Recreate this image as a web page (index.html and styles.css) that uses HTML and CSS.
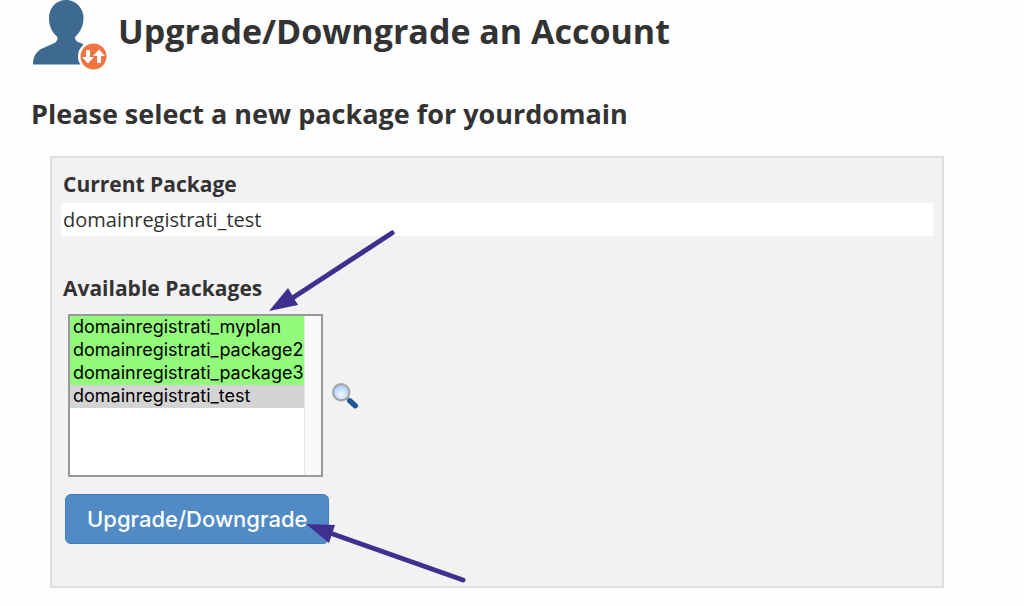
FILE: index.html
```html
<!DOCTYPE html>
<html lang="en">
<head>
<meta charset="utf-8">
<meta name="viewport" content="width=device-width, initial-scale=1">
<title>Upgrade/Downgrade an Account</title>
<link rel="stylesheet" href="styles.css">
</head>
<body>
<main class="page">
  <header class="page-header">
    <svg class="account-icon" viewBox="0 0 76 72" aria-hidden="true">
      <path fill="#3e6990" d="M34 0C24 0 17 8 17 18c0 8 3 14 7.500 18 2 2 1 5-2 7L9 49C4 52 1 57 1 64.500h50V44l-5-2c-3-2-4-4-2-6 4-4 7.500-10 7.500-18C51.500 8 44 0 34 0z"/>
      <circle cx="61.500" cy="56.500" r="15.500" fill="#fff"/>
      <circle cx="61.500" cy="56.500" r="13" fill="#f07440"/>
      <path fill="#fff" d="M54 50h4v7h4l-6 6.500-6-6.500h4zM65 63h4v-7h4L67 49.500 61 56h4z"/>
    </svg>
    <h1 class="page-title">Upgrade/Downgrade an Account</h1>
  </header>

  <h2 class="page-subtitle">Please select a new package for yourdomain</h2>

  <form class="panel">
    <h3 class="field-title">Current Package</h3>
    <div class="current-package">domainregistrati_test</div>

    <label class="field-title available-title" for="packages">Available Packages</label>
    <div class="package-row">
      <select class="package-list" id="packages" name="package" size="7">
        <option class="package available">domainregistrati_myplan</option>
        <option class="package available">domainregistrati_package2</option>
        <option class="package available">domainregistrati_package3</option>
        <option class="package current">domainregistrati_test</option>
      </select>
      <button class="search-button" type="button" aria-label="View package details">
        <svg class="search-icon" viewBox="0 0 26 26" aria-hidden="true">
          <defs>
            <radialGradient id="lens" cx="50%" cy="65%" r="60%">
              <stop offset="0" stop-color="#f4f9ff"/>
              <stop offset="1" stop-color="#a9ccf4"/>
            </radialGradient>
          </defs>
          <path d="M14.500 14.500l3 3" stroke="#a58a70" stroke-width="3"/>
          <path d="M17.500 17.500l5 4.500" stroke="#1e5799" stroke-width="5" stroke-linecap="round"/>
          <circle cx="9.500" cy="9.500" r="7.500" fill="url(#lens)" stroke="#a3a6aa" stroke-width="2"/>
        </svg>
      </button>
      <svg class="arrow arrow-list" viewBox="0 0 128 84" aria-hidden="true">
        <path d="M124 4L26 68" stroke="#412f90" stroke-width="5" stroke-linecap="round"/>
        <path d="M1 82L20 59l10 17z" fill="#412f90"/>
      </svg>
    </div>

    <div class="actions">
      <button class="submit-button" type="button">Upgrade/Downgrade</button>
      <svg class="arrow arrow-submit" viewBox="0 0 162 62" aria-hidden="true">
        <path d="M157 57L24 10" stroke="#412f90" stroke-width="5" stroke-linecap="round"/>
        <path d="M0 1l29 1-6 18z" fill="#412f90"/>
      </svg>
    </div>
  </form>
</main>
</body>
</html>
```
FILE: styles.css
```css
* {
  box-sizing: border-box;
}

body {
  margin: 0;
  background: #fefefe;
  color: #333;
  font-family: "Open Sans", sans-serif;
}

.page {
  padding: 0 80px 16px 31px;
}

.page-header {
  display: flex;
  align-items: flex-start;
  gap: 10px;
}

.account-icon {
  flex: none;
  width: 76px;
  height: 72px;
  margin-left: 1px;
}

.page-title {
  margin: 7px 0 0;
  font-size: 34px;
  line-height: 48px;
}

.page-subtitle {
  margin: 24px 0;
  font-size: 27px;
  line-height: 36px;
}

.panel {
  margin-left: 19px;
  padding: 8px 9px 42px;
  border: 2px solid #dcdee0;
  background: #f2f2f2;
}

.field-title {
  display: block;
  margin: 0;
  padding: 3px 2px 4px;
  font-size: 21px;
  font-weight: 700;
  line-height: 30px;
}

.current-package {
  padding: 0 2px;
  background: #fff;
  font-size: 20px;
  line-height: 33px;
}

.available-title {
  margin-top: 34px;
}

.package-row {
  position: relative;
  display: flex;
  align-items: center;
  gap: 8px;
  margin: 7px 0 0 7px;
}

.package-list {
  width: 255px;
  height: 163px;
  padding: 0 17px 0 0;
  overflow: hidden;
  border: 2px solid #999;
  border-radius: 0;
  outline: 0;
  background: linear-gradient(to left, #fafafa 16px, #e6e6e6 16px, #e6e6e6 17px, #fff 17px);
  color: #000;
  font-family: Inter, sans-serif;
  font-size: 18px;
}

.package {
  min-height: 23px;
  padding: 0 3px;
  line-height: 23px;
}

.package.available {
  background: #92fb7b;
}

.package.current {
  background: #d4d4d4;
}

.search-button {
  padding: 0;
  border: 0;
  background: none;
  cursor: pointer;
}

.search-icon {
  display: block;
  width: 28px;
  height: 28px;
}

.actions {
  position: relative;
  display: flex;
  margin: 17px 0 0 4px;
}

.submit-button {
  padding: 0 21px;
  border: 1px solid #3f7fbd;
  border-radius: 6px;
  background: #508bc6;
  color: #fff;
  font-family: Inter, sans-serif;
  font-size: 22px;
  font-weight: 500;
  line-height: 48px;
  cursor: pointer;
}

.arrow {
  position: absolute;
  pointer-events: none;
}

.arrow-list {
  top: -85px;
  left: 200px;
  width: 128px;
  height: 84px;
}

.arrow-submit {
  top: 29px;
  left: 241px;
  width: 162px;
  height: 62px;
}
```
